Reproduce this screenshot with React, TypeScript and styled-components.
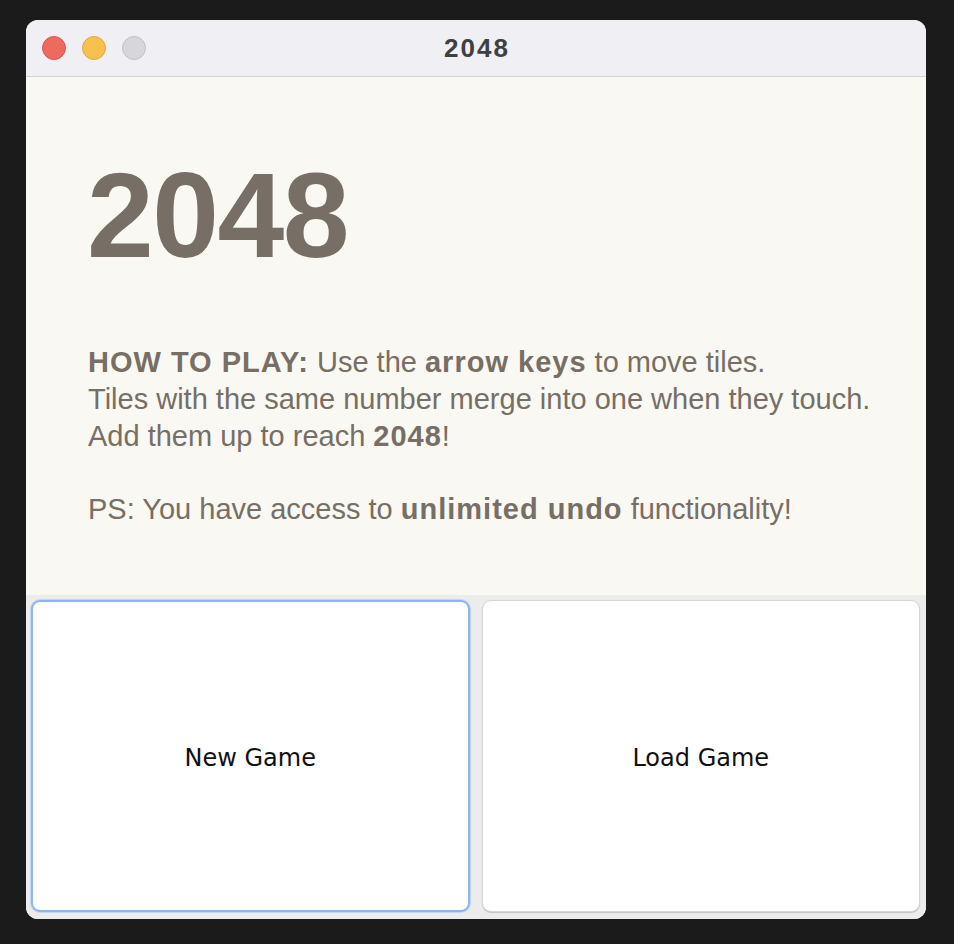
import styled, { createGlobalStyle } from "styled-components";

const GlobalStyle = createGlobalStyle`
  html, body {
    margin: 0;
    padding: 0;
    background: #1b1b1b;
  }
  body {
    font-family: "Liberation Sans", Arial, sans-serif;
  }
`;

const App = () => {
  return (
    <>
      <GlobalStyle />
      <Page>
        <Window>
          {/* title bar */}
          <TitleBar>
            <Lights>
              <Light $color="#ee6a5f" $border="#d7574d" />
              <Light $color="#f6c151" $border="#dea93c" />
              <Light $color="#d8d6db" $border="#c3c1c6" />
            </Lights>
            <WindowTitle>2048</WindowTitle>
          </TitleBar>

          {/* intro text */}
          <Intro>
            <Heading>2048</Heading>
            <Rules>
              <strong>HOW TO PLAY:</strong> Use the <strong>arrow keys</strong> to move tiles.
              <br />
              Tiles with the same number merge into one when they touch.
              <br />
              Add them up to reach <strong>2048</strong>!
            </Rules>
            <Rules>
              PS: You have access to <strong>unlimited undo</strong> functionality!
            </Rules>
          </Intro>

          {/* buttons */}
          <ButtonRow>
            <MenuButton $focused>New Game</MenuButton>
            <MenuButton>Load Game</MenuButton>
          </ButtonRow>
        </Window>
      </Page>
    </>
  );
};

const Page = styled.div`
  padding: 20px 28px 25px 26px;
`;

const Window = styled.div`
  width: 900px;
  height: 899px;
  border-radius: 12px;
  overflow: hidden;
  display: flex;
  flex-direction: column;
  background: #ececec;
`;

const TitleBar = styled.div`
  position: relative;
  height: 56px;
  flex-shrink: 0;
  background: #f0eff4;
  border-bottom: 1px solid #d4d3d3;
  display: flex;
  align-items: center;
  justify-content: center;
`;

const Lights = styled.div`
  position: absolute;
  left: 16px;
  top: 16px;
  display: flex;
  gap: 16px;
`;

const Light = styled.span<{ $color: string; $border: string }>`
  width: 24px;
  height: 24px;
  border-radius: 50%;
  background: ${({ $color }) => $color};
  border: 1px solid ${({ $border }) => $border};
  box-sizing: border-box;
`;

const WindowTitle = styled.div`
  font-size: 26px;
  font-weight: 700;
  color: #404040;
  letter-spacing: 2px;
  margin-left: 2px;
`;

const Intro = styled.div`
  height: 518px;
  flex-shrink: 0;
  box-sizing: border-box;
  background: #f9f8f2;
  padding: 78px 20px 0 62px;
  color: #776e65;
  white-space: nowrap;
`;

const Heading = styled.h1`
  margin: 0 0 69px;
  font-size: 120px;
  line-height: 1;
  font-weight: 700;
  letter-spacing: -1.5px;
  margin-left: -1px;
`;

const Rules = styled.p`
  margin: 0 0 36px;
  font-size: 29px;
  line-height: 37px;

  strong {
    font-weight: 700;
    letter-spacing: 1px;
  }
`;

const ButtonRow = styled.div`
  flex: 1;
  display: grid;
  grid-template-columns: 1fr 1fr;
  gap: 12px;
  padding: 5px 6px 7px 5px;
  background: #ececec;
`;

const MenuButton = styled.button<{ $focused?: boolean }>`
  background: #ffffff;
  border-radius: 9px;
  font-family: "DejaVu Sans", "Liberation Sans", sans-serif;
  font-size: 24px;
  color: #111;
  cursor: pointer;
  padding-top: 4px;
  border: ${({ $focused }) =>
    $focused ? "2px solid #8db4ee" : "1px solid #d6d6d6"};
  box-shadow: ${({ $focused }) =>
    $focused ? "0 0 0 1px #c3d8f7" : "0 1px 1px rgba(0,0,0,0.18)"};
`;

export default App;
